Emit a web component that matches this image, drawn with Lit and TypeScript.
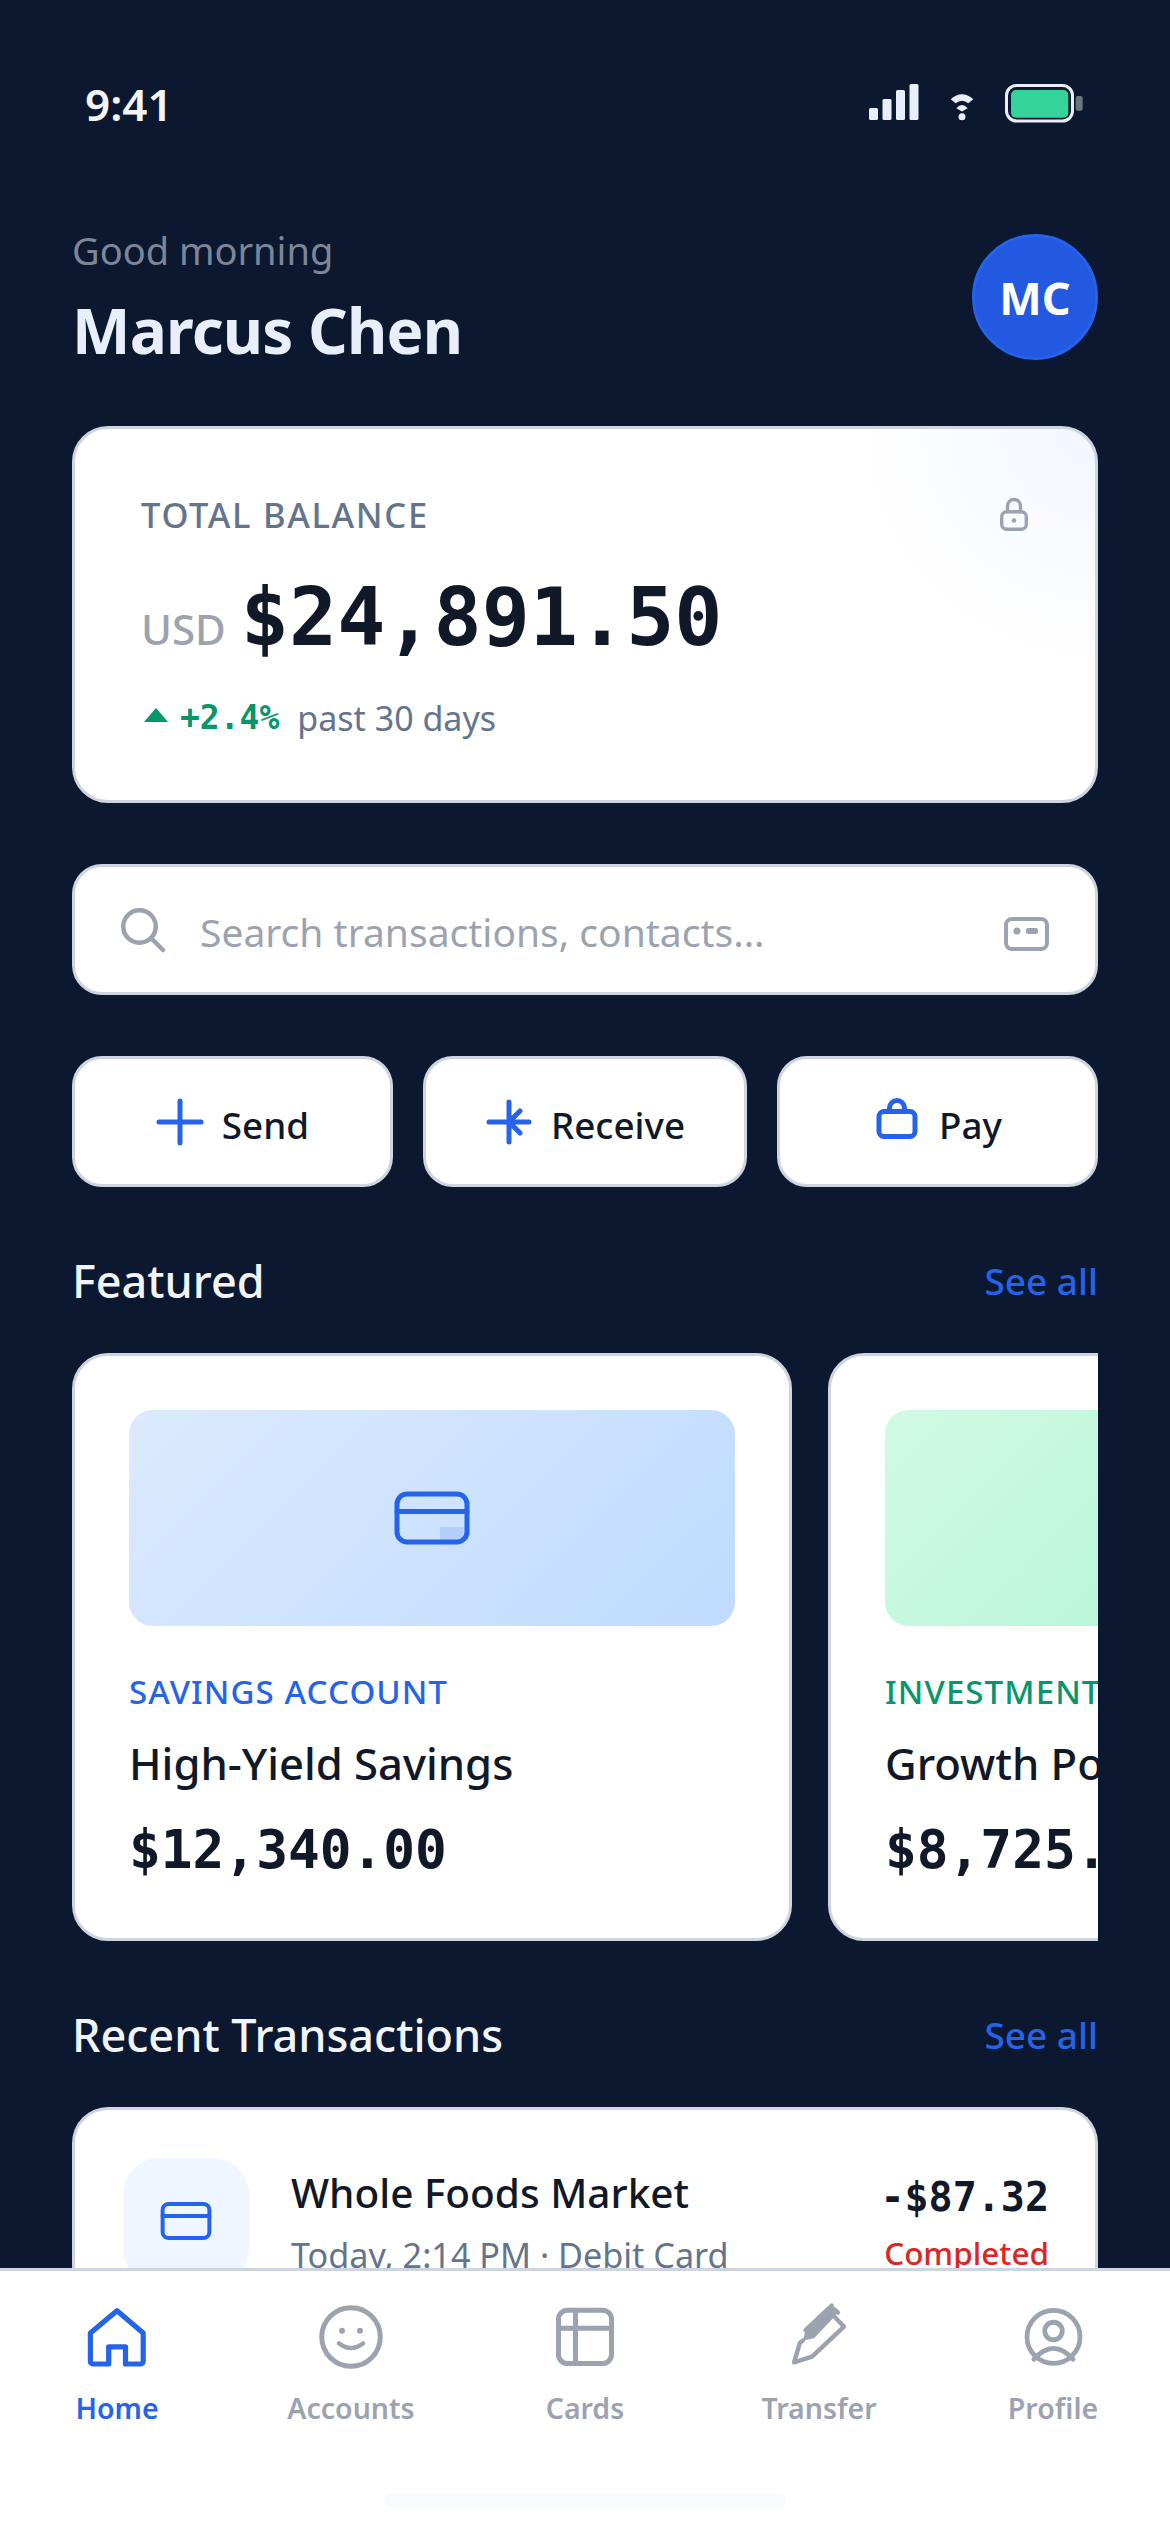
import { LitElement, html, css, svg } from "lit";
import { customElement } from "lit/decorators.js";

const TABS = [
  { label: "Home", on: true, sw: 5.2, body: svg`<path d="M9.4 32L36 9.800L62.200 32V60.500a2.500 2.500 0 0 1-2.500 2.500H44.500V45.800H27.700V63H11.900a2.500 2.500 0 0 1-2.500-2.500Z"/>` },
  { label: "Accounts", on: false, sw: 5, body: svg`<circle cx="36" cy="36" r="29.250"/><circle cx="27" cy="29.700" r="3" class="solid"/><circle cx="45" cy="29.700" r="3" class="solid"/><path d="M24 42.500q12 9 24 0" stroke-width="4.500"/>` },
  { label: "Cards", on: false, sw: 5, body: svg`<rect x="9.500" y="9.200" width="53" height="53.300" rx="9"/><path d="M9.500 27.300h53M26.500 9.200v53.300"/>` },
  { label: "Transfer", on: false, sw: 4.4, body: svg`<path class="solid" d="M20 39.500L22.500 29L48.700 4.700L51 8L54.500 11L51.500 15.700L31 37.300Z"/><path d="M11.100 61.300L17 41.700L20 39.500M51.500 15.700L61 25.700L29 55.700L11.100 61.300M22.500 29L48.700 4.700M51 8L54.900 11.700"/>` },
  { label: "Profile", on: false, sw: 4.800, body: svg`<circle cx="36.500" cy="35.900" r="26.500"/><circle cx="36.500" cy="30" r="8.750"/><path d="M16.800 58.300Q36.500 36.300 56 58.300"/>` },
];

@customElement("app-root")
export class AppRoot extends LitElement {
  static styles = css`
    :host { display: block; width: 1170px; height: 2532px; overflow: hidden; font-family: "Noto Sans", sans-serif; }
    * { box-sizing: border-box; }
    svg { display: block; flex: none; fill: none; stroke: currentColor; stroke-linecap: round; stroke-linejoin: round; overflow: visible; }
    .solid { fill: currentColor; stroke: none; }
    .screen { width: 1170px; height: 2532px; background: #0c1830; display: flex; flex-direction: column; overflow: hidden; }
    .scroll { flex: 1; min-height: 0; overflow: hidden; padding: 0 72px; display: flex; flex-direction: column; }
    .status { height: 210px; padding: 66px 15px 0 13px; display: flex; justify-content: space-between; align-items: flex-start; flex: none; }
    .time { font-size: 44px; line-height: 76px; font-weight: 600; color: #f1f5f9; }
    .status-icons { display: flex; align-items: flex-start; gap: 31px; margin-top: 18px; color: #e9effa; }
    .status-icons svg { stroke: none; fill: currentColor; }
    .wifi { margin-top: 10px; }
    .bat-frame { fill: none !important; stroke: #e9effa !important; stroke-width: 3; }
    .bat-fill { fill: #34d399; }
    .bat-nub { fill: #6b7280; }
    .header { display: flex; justify-content: space-between; align-items: center; height: 126px; margin-top: 24px; flex: none; }
    .greet { font-size: 38px; line-height: 48px; color: #7c8698; margin-top: -8px; }
    .name { font-size: 62px; line-height: 78px; font-weight: 700; color: #e9effa; letter-spacing: -0.8px; margin-top: 17px; margin-bottom: -9px; }
    .avatar { width: 126px; height: 126px; border-radius: 50%; background: #2259e0; border: 3px solid #2563eb; color: #fff; font-size: 45px; font-weight: 700; display: flex; align-items: center; justify-content: center; }
    .panel { background: #fff; border: 3px solid #cfd5e0; }
    .balance { margin-top: 66px; height: 377px; border-radius: 36px; padding: 61px 66px 0; overflow: hidden; flex: none;
      background: radial-gradient(circle at 100% 0, #f3f6fe 0, #fff 240px); }
    .bal-top { display: flex; justify-content: space-between; align-items: center; height: 48px; }
    .bal-label { font-size: 34.500px; font-weight: 500; letter-spacing: 1.700px; color: #64748b; }
    .lock { color: #9ca3af; margin-right: 1px; }
    .amount-row { display: flex; align-items: baseline; gap: 15px; margin-top: 26px; }
    .usd { font-size: 42px; font-weight: 500; color: #9ca3af; }
    .amount { font-family: "DejaVu Sans Mono", monospace; font-size: 80px; line-height: 108px; font-weight: 700; color: #111827; }
    .delta { display: flex; align-items: center; margin-top: 19px; height: 54px; }
    .tri { width: 0; height: 0; border-left: 12px solid transparent; border-right: 12px solid transparent; border-bottom: 14px solid #059669; margin: -6px 12px 0 3px; }
    .pct { font-family: "DejaVu Sans Mono", monospace; font-size: 33px; font-weight: 700; color: #059669; margin: -2px 18px 0 0; }
    .past { font-size: 34px; color: #64748b; }
    .search { margin-top: 61px; height: 131px; border-radius: 30px; display: flex; align-items: center; padding: 0 45px; color: #9ca3af; flex: none; }
    .search-text { flex: 1; font-size: 39px; margin: 3px 0 0 32px; }
    .actions { margin-top: 61px; display: flex; gap: 30px; flex: none; }
    .action { flex: 1 1 0; height: 131px; border-radius: 30px; display: flex; align-items: center; justify-content: center; gap: 12px; padding-right: 6px; font-size: 36.800px; font-weight: 500; color: #111827; }
    .action span { margin-top: 6px; }
    .action svg { color: #2563eb; }
    .action.mid { flex: 1.01 1 0; }
    .section { margin-top: 60px; display: flex; justify-content: space-between; align-items: center; height: 66px; flex: none; }
    .section h2 { margin: 0; font-size: 45px; font-weight: 500; color: #f1f5f9; }
    .section a { font-size: 37px; font-weight: 500; color: #2563eb; }
    .rail { margin-top: 40px; display: flex; gap: 36px; overflow: hidden; flex: none; }
    .feat { flex: none; width: 720px; height: 588px; border-radius: 36px; padding: 54px; }
    .thumb { height: 216px; border-radius: 24px; display: flex; align-items: center; justify-content: center; color: #2563eb; }
    .blue { background: linear-gradient(135deg, #dbeafe, #bfdbfe); }
    .green { background: linear-gradient(135deg, #d1fae5, #a7f3d0); }
    .cat { margin-top: 44px; font-size: 33px; line-height: 44px; font-weight: 500; letter-spacing: 1.100px; white-space: nowrap; }
    .cat.b { color: #2563eb; }
    .cat.g { color: #059669; }
    .fname { margin-top: 19px; font-size: 43.600px; line-height: 60px; font-weight: 500; color: #111827; white-space: nowrap; }
    .fval { margin-top: 22px; font-family: "DejaVu Sans Mono", monospace; font-size: 52.800px; line-height: 70px; font-weight: 700; color: #111827; white-space: nowrap; }
    .tx { margin-top: 40px; border-radius: 36px 36px 0 0; border-bottom: none; padding: 48px 46px 48px 48px; display: flex; align-items: flex-start; flex: none; height: 400px; }
    .tx-icon { width: 126px; height: 126px; border-radius: 36px; background: #eff6ff; color: #2563eb; display: flex; align-items: center; justify-content: center; flex: none; }
    .tx-main { flex: 1; margin-left: 42px; }
    .tx-name { font-size: 40.500px; line-height: 58px; font-weight: 500; color: #111827; margin-top: 6px; }
    .tx-sub { font-size: 34.200px; line-height: 48px; color: #64748b; margin-top: 9px; }
    .tx-right { text-align: right; }
    .tx-val { font-family: "DejaVu Sans Mono", monospace; font-size: 40px; line-height: 58px; font-weight: 700; color: #111827; margin-top: 10px; }
    .tx-status { font-size: 31.500px; line-height: 44px; font-weight: 500; color: #dc2626; margin-top: 5px; }
    .nav { flex: none; height: 264px; background: #fff; border-top: 3px solid #cfd5e0; position: relative; display: flex; padding-top: 30px; }
    .tab { flex: 1 1 0; display: flex; flex-direction: column; align-items: center; color: #9ca3af; font-size: 28.500px; font-weight: 600; }
    .tab span { white-space: nowrap; line-height: 42px; margin-top: 14px; }
    .tab.on { color: #2563eb; }
    .indicator { position: absolute; left: 384px; top: 222px; width: 402px; height: 15px; border-radius: 8px; background: #f8fafc; }
  `;

  icon(size: number, sw: number, vb: string, body: unknown) {
    return html`<svg width=${size} height=${size} viewBox=${vb} stroke-width=${sw}>${body}</svg>`;
  }

  render() {
    return html`<div class="screen">
      <div class="scroll">
        <div class="status"><div class="time">9:41</div>
          <div class="status-icons">
            <svg width="50" height="36" viewBox="0 0 50 36">
              <rect x="0" y="24" width="9" height="12" rx="1.500"/><rect x="13.500" y="15" width="9" height="21" rx="1.500"/><rect x="27" y="6" width="9" height="30" rx="1.500"/><rect x="40.500" y="0" width="9" height="36" rx="1.500"/>
            </svg>
            <svg class="wifi" width="24" height="26" viewBox="0 0 24 26">
              <path d="M.7 5.300Q12-4.700 23.300 5.300L18.300 9.300Q12 4.100 5.700 9.300Z"/>
              <path d="M6.300 14.300Q12 7.700 17.700 14.300L12 17.500Z"/>
              <circle cx="12" cy="22.700" r="3.500"/>
            </svg>
            <svg width="78" height="40" viewBox="0 0 78 40">
              <rect class="bat-frame" x="1.500" y="1.500" width="66" height="35.500" rx="10"/>
              <rect class="bat-fill" x="6" y="6" width="57.300" height="27.700" rx="5"/>
              <rect class="bat-nub" x="70.700" y="12" width="7" height="14.700" rx="2"/>
            </svg>
          </div>
        </div>
        <div class="header">
          <div><div class="greet">Good morning</div><div class="name">Marcus Chen</div></div>
          <div class="avatar">MC</div>
        </div>
        <div class="panel balance">
          <div class="bal-top"><div class="bal-label">TOTAL BALANCE</div>
            <div class="lock"><svg width="28" height="33" viewBox="0 0 28 33" stroke-width="3.400"><rect x="1.700" y="13.700" width="24.600" height="17.600" rx="5"/><path d="M7.500 13.700V8a6.500 6.500 0 0 1 13 0v5.700"/><circle class="solid" cx="14" cy="22.500" r="2.300"/></svg></div></div>
          <div class="amount-row"><span class="usd">USD</span><span class="amount">$24,891.50</span></div>
          <div class="delta"><i class="tri"></i><span class="pct">+2.4%</span><span class="past">past 30 days</span></div>
        </div>
        <div class="panel search">
          ${this.icon(48, 4.500, "0 0 48 48", svg`<circle cx="19.500" cy="20.500" r="16.250"/><path d="M31 32l12 12"/>`)}
          <div class="search-text">Search transactions, contacts...</div>
          ${this.icon(48, 4, "0 0 48 48", svg`<rect x="4" y="13" width="41" height="30" rx="6"/><circle class="solid" cx="15" cy="25" r="3.500"/><rect class="solid" x="24" y="22" width="12" height="6" rx="2"/>`)}
        </div>
        <div class="actions">
          <div class="panel action">${this.icon(60, 2, "0 0 24 24", svg`<path d="M12 3.600v16.800M3.600 12h16.800"/>`)}<span>Send</span></div>
          <div class="panel action mid">${this.icon(60, 2, "0 0 24 24", svg`<path d="M12 4v16M4 12h16M12 12l4.400-4.400M12 12l4.400 4.400"/>`)}<span>Receive</span></div>
          <div class="panel action">${this.icon(60, 2, "0 0 24 24", svg`<rect x="4.800" y="7.800" width="14.400" height="10" rx="2"/><path d="M9 7.800V6.400a3 3 0 0 1 6 0v1.400"/>`)}<span>Pay</span></div>
        </div>
        <div class="section"><h2>Featured</h2><a>See all</a></div>
        <div class="rail">
          <div class="panel feat">
            <div class="thumb blue">${this.icon(96, 1.250, "0 0 24 24", svg`<rect x="3.250" y="6" width="17.500" height="12" rx="2.500"/><path d="M3.250 10.400h17.500"/><rect class="solid" x="14" y="14.250" width="5.900" height="3.250" opacity=".15"/>`)}</div>
            <div class="cat b">SAVINGS ACCOUNT</div><div class="fname">High-Yield Savings</div><div class="fval">$12,340.00</div>
          </div>
          <div class="panel feat">
            <div class="thumb green"></div>
            <div class="cat g">INVESTMENT ACCOUNT</div><div class="fname">Growth Portfolio</div><div class="fval">$8,725.00</div>
          </div>
        </div>
        <div class="section"><h2>Recent Transactions</h2><a>See all</a></div>
        <div class="panel tx">
          <div class="tx-icon">${this.icon(66, 1.450, "0 0 24 24", svg`<rect x="3.500" y="5.800" width="17" height="12.400" rx="2.200"/><path d="M3.500 10.200h17"/>`)}</div>
          <div class="tx-main"><div class="tx-name">Whole Foods Market</div><div class="tx-sub">Today, 2:14 PM · Debit Card</div></div>
          <div class="tx-right"><div class="tx-val">-$87.32</div><div class="tx-status">Completed</div></div>
        </div>
      </div>
      <div class="nav">
        ${TABS.map((t) => html`<div class="tab ${t.on ? "on" : ""}">${this.icon(72, t.sw, "0 0 72 72", t.body)}<span>${t.label}</span></div>`)}
        <div class="indicator"></div>
      </div>
    </div>`;
  }
}
